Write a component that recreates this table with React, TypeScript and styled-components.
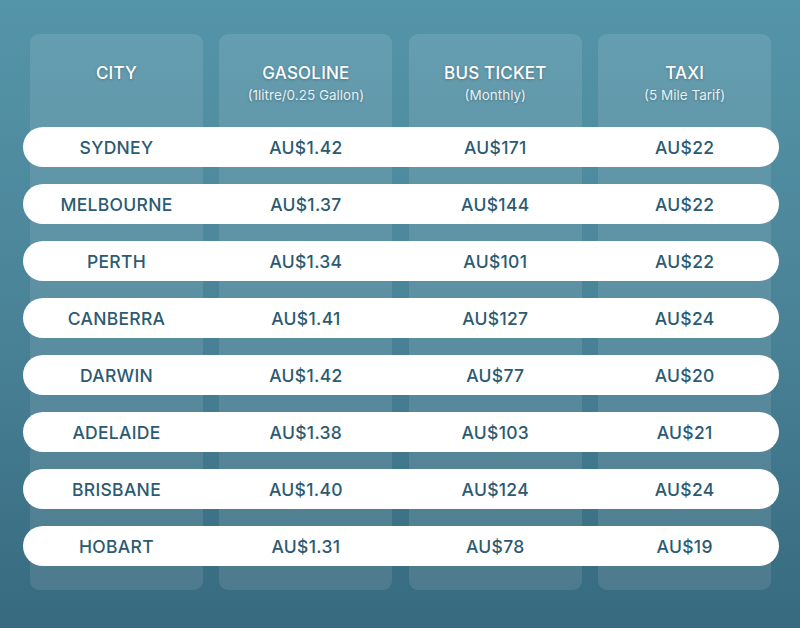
import React from "react";
import styled, { createGlobalStyle } from "styled-components";

const GlobalStyle = createGlobalStyle`
  html, body {
    margin: 0;
    padding: 0;
  }
  body {
    font-family: Inter, "Noto Sans", "Liberation Sans", sans-serif;
  }
`;

const Page = styled.div`
  width: 800px;
  height: 628px;
  background: linear-gradient(180deg, #5595a9 0%, #4a8398 50%, #376a7e 100%);
  box-sizing: border-box;
  padding: 34px 0 0 30px;
  overflow: hidden;
`;

const Table = styled.div`
  display: grid;
  grid-template-columns: repeat(4, 173px);
  grid-template-rows: 76px repeat(8, 40px) 7px;
  column-gap: 16.4px;
  row-gap: 17px;
  width: 741px;
`;

const Panel = styled.div<{ $col: number }>`
  grid-column: ${(p) => p.$col};
  grid-row: 1 / -1;
  background: rgba(255, 255, 255, 0.1);
  border-radius: 9px;
`;

const HeadCell = styled.div<{ $col: number }>`
  grid-column: ${(p) => p.$col};
  grid-row: 1;
  display: flex;
  flex-direction: column;
  align-items: center;
  padding-top: 29px;
  color: #ffffff;
  text-shadow: 0 1px 3px rgba(0, 0, 0, 0.25);
`;

const HeadTitle = styled.div`
  font-size: 17px;
  font-weight: 500;
  line-height: 20px;
  letter-spacing: 0.2px;
`;

const HeadSub = styled.div`
  font-size: 13.5px;
  line-height: 16px;
  margin-top: 4px;
  color: rgba(255, 255, 255, 0.88);
`;

const Row = styled.div<{ $row: number }>`
  grid-column: 1 / -1;
  grid-row: ${(p) => p.$row};
  margin: 0 -8px 0 -7px;
  padding: 0 8px 0 7px;
  background: #ffffff;
  border-radius: 20px;
  display: grid;
  grid-template-columns: repeat(4, 173px);
  column-gap: 16.4px;
  align-items: center;
`;

const Cell = styled.div`
  text-align: center;
  color: #2b5a72;
  font-size: 17.5px;
  font-weight: 500;
  letter-spacing: 0.3px;
`;

const headers = [
  { title: "CITY" },
  { title: "GASOLINE", sub: "(1litre/0.25 Gallon)" },
  { title: "BUS TICKET", sub: "(Monthly)" },
  { title: "TAXI", sub: "(5 Mile Tarif)" },
];

const rows = [
  ["SYDNEY", "AU$1.42", "AU$171", "AU$22"],
  ["MELBOURNE", "AU$1.37", "AU$144", "AU$22"],
  ["PERTH", "AU$1.34", "AU$101", "AU$22"],
  ["CANBERRA", "AU$1.41", "AU$127", "AU$24"],
  ["DARWIN", "AU$1.42", "AU$77", "AU$20"],
  ["ADELAIDE", "AU$1.38", "AU$103", "AU$21"],
  ["BRISBANE", "AU$1.40", "AU$124", "AU$24"],
  ["HOBART", "AU$1.31", "AU$78", "AU$19"],
];

export default function App() {
  return (
    <>
      <GlobalStyle />
      <Page>
        <Table>
          {headers.map((_, i) => (
            <Panel key={"p" + i} $col={i + 1} />
          ))}
          {headers.map((h, i) => (
            <HeadCell key={"h" + i} $col={i + 1}>
              <HeadTitle>{h.title}</HeadTitle>
              {h.sub && <HeadSub>{h.sub}</HeadSub>}
            </HeadCell>
          ))}
          {rows.map((r, i) => (
            <Row key={r[0]} $row={i + 2}>
              {r.map((c, j) => (
                <Cell key={j}>{c}</Cell>
              ))}
            </Row>
          ))}
        </Table>
      </Page>
    </>
  );
}
